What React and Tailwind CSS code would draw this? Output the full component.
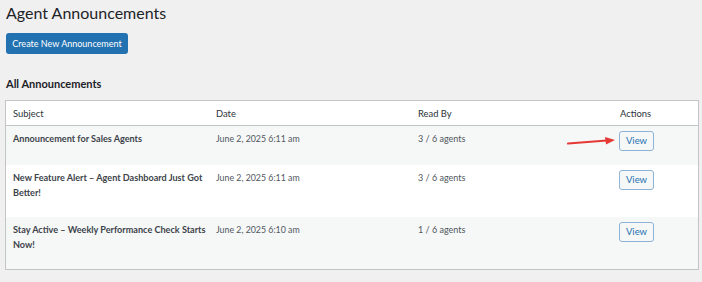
import React from "react";

const rows = [
  { subject: "Announcement for Sales Agents", date: "June 2, 2025 6:11 am", read: "3 / 6 agents", h: "h-[39px]", bg: "bg-[#f6f7f7]", arrow: true },
  { subject: "New Feature Alert – Agent Dashboard Just Got Better!", date: "June 2, 2025 6:11 am", read: "3 / 6 agents", h: "h-[52px]", bg: "bg-white" },
  { subject: "Stay Active – Weekly Performance Check Starts Now!", date: "June 2, 2025 6:10 am", read: "1 / 6 agents", h: "h-[52px]", bg: "bg-[#f6f7f7]" },
];

const Arrow = () => (
  <svg className="absolute left-[-52px] top-[5px]" width="50" height="10" viewBox="0 0 50 10">
    <line x1="1" y1="7.5" x2="40" y2="4.5" stroke="#e53935" strokeWidth="2.2" strokeLinecap="round" />
    <path d="M38 1 L48 4 L39 8.5 Z" fill="#e53935" />
  </svg>
);

const ViewButton = ({ arrow }) => (
  <div className="relative">
    {arrow && <Arrow />}
    <button className="block h-[20px] w-[35px] rounded-[3px] border border-[#8db3d9] bg-[#f6f7f7] text-[9.5px] text-[#2271b1] leading-none">
      View
    </button>
  </div>
);

export default function App() {
  return (
    <div className="flex h-[282px] w-[702px] flex-col items-start overflow-hidden bg-[#f0f0f1] px-[5px] font-['Lato',sans-serif] text-[#1d2327]">
      <h1 className="pl-[1px] pt-[1px] text-[16px] leading-[23px]">Agent Announcements</h1>
      <button className="ml-[1px] mt-[9px] block h-[21px] w-[122px] whitespace-nowrap rounded-[3px] bg-[#2271b1] text-[9px] leading-none text-white">
        Create New Announcement
      </button>
      <h2 className="mt-[23px] pl-[1px] text-[11px] font-bold leading-[14px]">All Announcements</h2>
      <div className="mt-[9px] w-[694px] border border-[#c3c4c7] bg-white">
        <div className="flex h-[25px] items-center border-b border-[#c3c4c7] pt-[2px] text-[9.4px] text-[#2c3338]">
          <div className="w-[202px] pl-[7px]">Subject</div>
          <div className="w-[202px] pl-[8px]">Date</div>
          <div className="w-[203px] pl-[8px]">Read By</div>
          <div className="pl-[7px]">Actions</div>
        </div>
        {rows.map((r, i) => (
          <div key={i} className={`flex ${r.h} ${r.bg} text-[9px] leading-[15px]`}>
            <div className="w-[202px] pl-[7px] pt-[5px] text-[9.1px] font-bold text-[#3c434a]">{r.subject}</div>
            <div className="w-[202px] pl-[8px] pt-[5px] text-[8.8px] text-[#50575e]">{r.date}</div>
            <div className="w-[203px] pl-[8px] pt-[5px] text-[#50575e]">{r.read}</div>
            <div className="pl-[6px] pt-[5px]">
              <ViewButton arrow={r.arrow} />
            </div>
          </div>
        ))}
      </div>
    </div>
  );
}
